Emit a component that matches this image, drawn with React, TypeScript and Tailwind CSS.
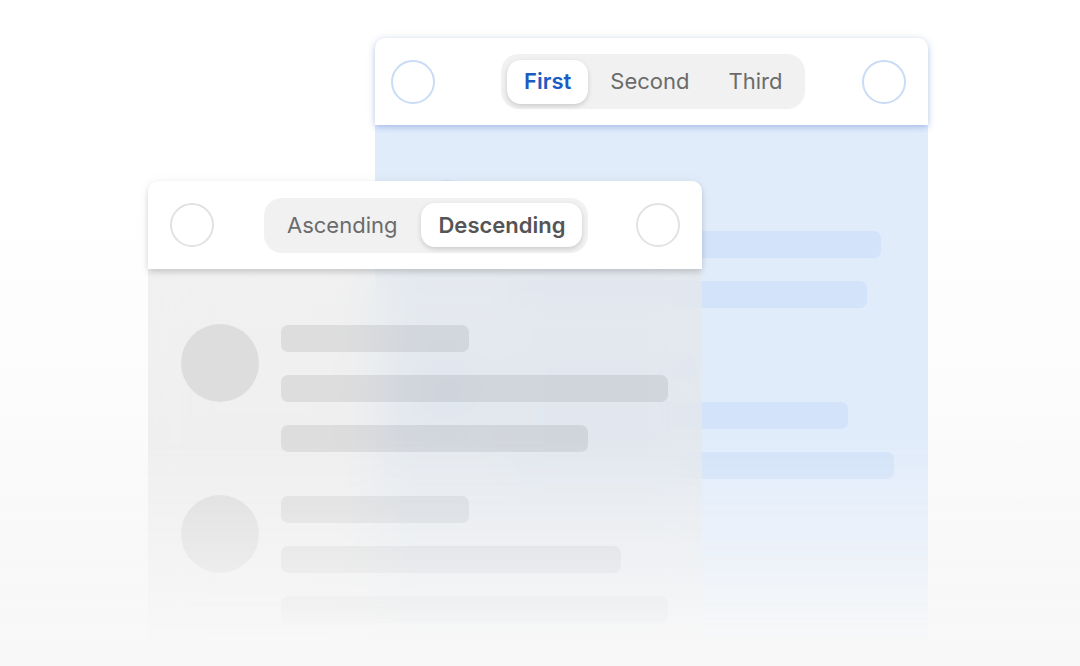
import React from "react";

type Tone = "blue" | "gray";

function Ring({ tone }: { tone: Tone }) {
  return (
    <div
      className={
        tone === "blue"
          ? "h-[44px] w-[44px] shrink-0 rounded-full border-2 border-[#c9dcf6] bg-white"
          : "h-[44px] w-[44px] shrink-0 rounded-full border-2 border-[#e2e2e2] bg-white"
      }
    />
  );
}

function Segmented({
  items,
  active,
  activeClass,
  gap,
}: {
  items: string[];
  active: number;
  activeClass: string;
  gap: string;
}) {
  return (
    <div className={`flex h-[55px] items-center rounded-[18px] bg-[#f1f1f1] p-[6px] ${gap}`}>
      {items.map((label, i) => (
        <div
          key={label}
          className={
            i === active
              ? `flex h-[44px] items-center rounded-[14px] bg-white px-[17px] text-[22px] font-semibold shadow-[0_2px_5px_rgba(0,0,0,0.16)] ${activeClass}`
              : "flex h-[44px] items-center px-[17px] text-[22px] font-normal text-[#6b6b6b]"
          }
        >
          {label}
        </div>
      ))}
    </div>
  );
}

function Skeleton({
  bars,
  tone,
}: {
  bars: [number, number, number];
  tone: Tone;
}) {
  const fill = tone === "blue" ? "bg-[#d3e3f9]" : "bg-black/[0.08]";
  return (
    <div className="flex gap-[22px]">
      <div className={`h-[78px] w-[78px] shrink-0 rounded-full ${fill}`} />
      <div className="flex flex-col gap-[23px] pt-px">
        {bars.map((w, i) => (
          <div key={i} className={`h-[27px] rounded-[7px] ${fill}`} style={{ width: w }} />
        ))}
      </div>
    </div>
  );
}

export default function App() {
  return (
    <div
      className="relative h-[666px] w-[1080px] overflow-hidden bg-gradient-to-b from-white from-30% to-[#f7f7f7]"
      style={{ fontFamily: "Inter, 'Noto Sans', sans-serif" }}
    >
      {/* back card */}
      <div className="absolute left-[375px] top-[38px] flex h-[640px] w-[553px] flex-col">
        <div className="relative z-10 flex h-[87px] shrink-0 items-center rounded-t-[10px] bg-white pl-[16px] shadow-[0_2px_6px_rgba(60,110,210,0.35),0_0_14px_rgba(0,0,0,0.04)]">
          <Ring tone="blue" />
          <div className="ml-[66px]">
            <Segmented
              items={["First", "Second", "Third"]}
              active={0}
              activeClass="text-[#1b5cc3]"
              gap="gap-[5px]"
            />
          </div>
          <div className="ml-[57px]">
            <Ring tone="blue" />
          </div>
        </div>
        <div className="flex flex-1 flex-col gap-[43px] bg-[#e1ecfb] pl-[33px] pt-[55px]">
          <Skeleton bars={[188, 373, 359]} tone="blue" />
          <Skeleton bars={[188, 340, 386]} tone="blue" />
        </div>
      </div>

      {/* front card */}
      <div className="absolute left-[148px] top-[181px] flex h-[500px] w-[554px] flex-col">
        <div className="relative z-10 flex h-[88px] shrink-0 items-center rounded-t-[10px] bg-white pl-[22px] shadow-[0_3px_6px_rgba(0,0,0,0.16),0_0_14px_rgba(0,0,0,0.04)]">
          <Ring tone="gray" />
          <div className="ml-[50px]">
            <Segmented
              items={["Ascending", "Descending"]}
              active={1}
              activeClass="text-[#555555]"
              gap="gap-[7px]"
            />
          </div>
          <div className="ml-[48px]">
            <Ring tone="gray" />
          </div>
        </div>
        <div className="flex flex-1 flex-col gap-[43px] bg-[#e8e8e8]/60 pl-[33px] pt-[55px] backdrop-blur-xl">
          <Skeleton bars={[188, 387, 307]} tone="gray" />
          <Skeleton bars={[188, 340, 387]} tone="gray" />
        </div>
      </div>

      {/* bottom fade */}
      <div className="pointer-events-none absolute inset-x-0 bottom-0 h-[230px] bg-gradient-to-b from-[#f8f8f8]/0 via-[#f8f8f8]/55 via-55% to-[#f8f8f8] to-[92%]" />
    </div>
  );
}
